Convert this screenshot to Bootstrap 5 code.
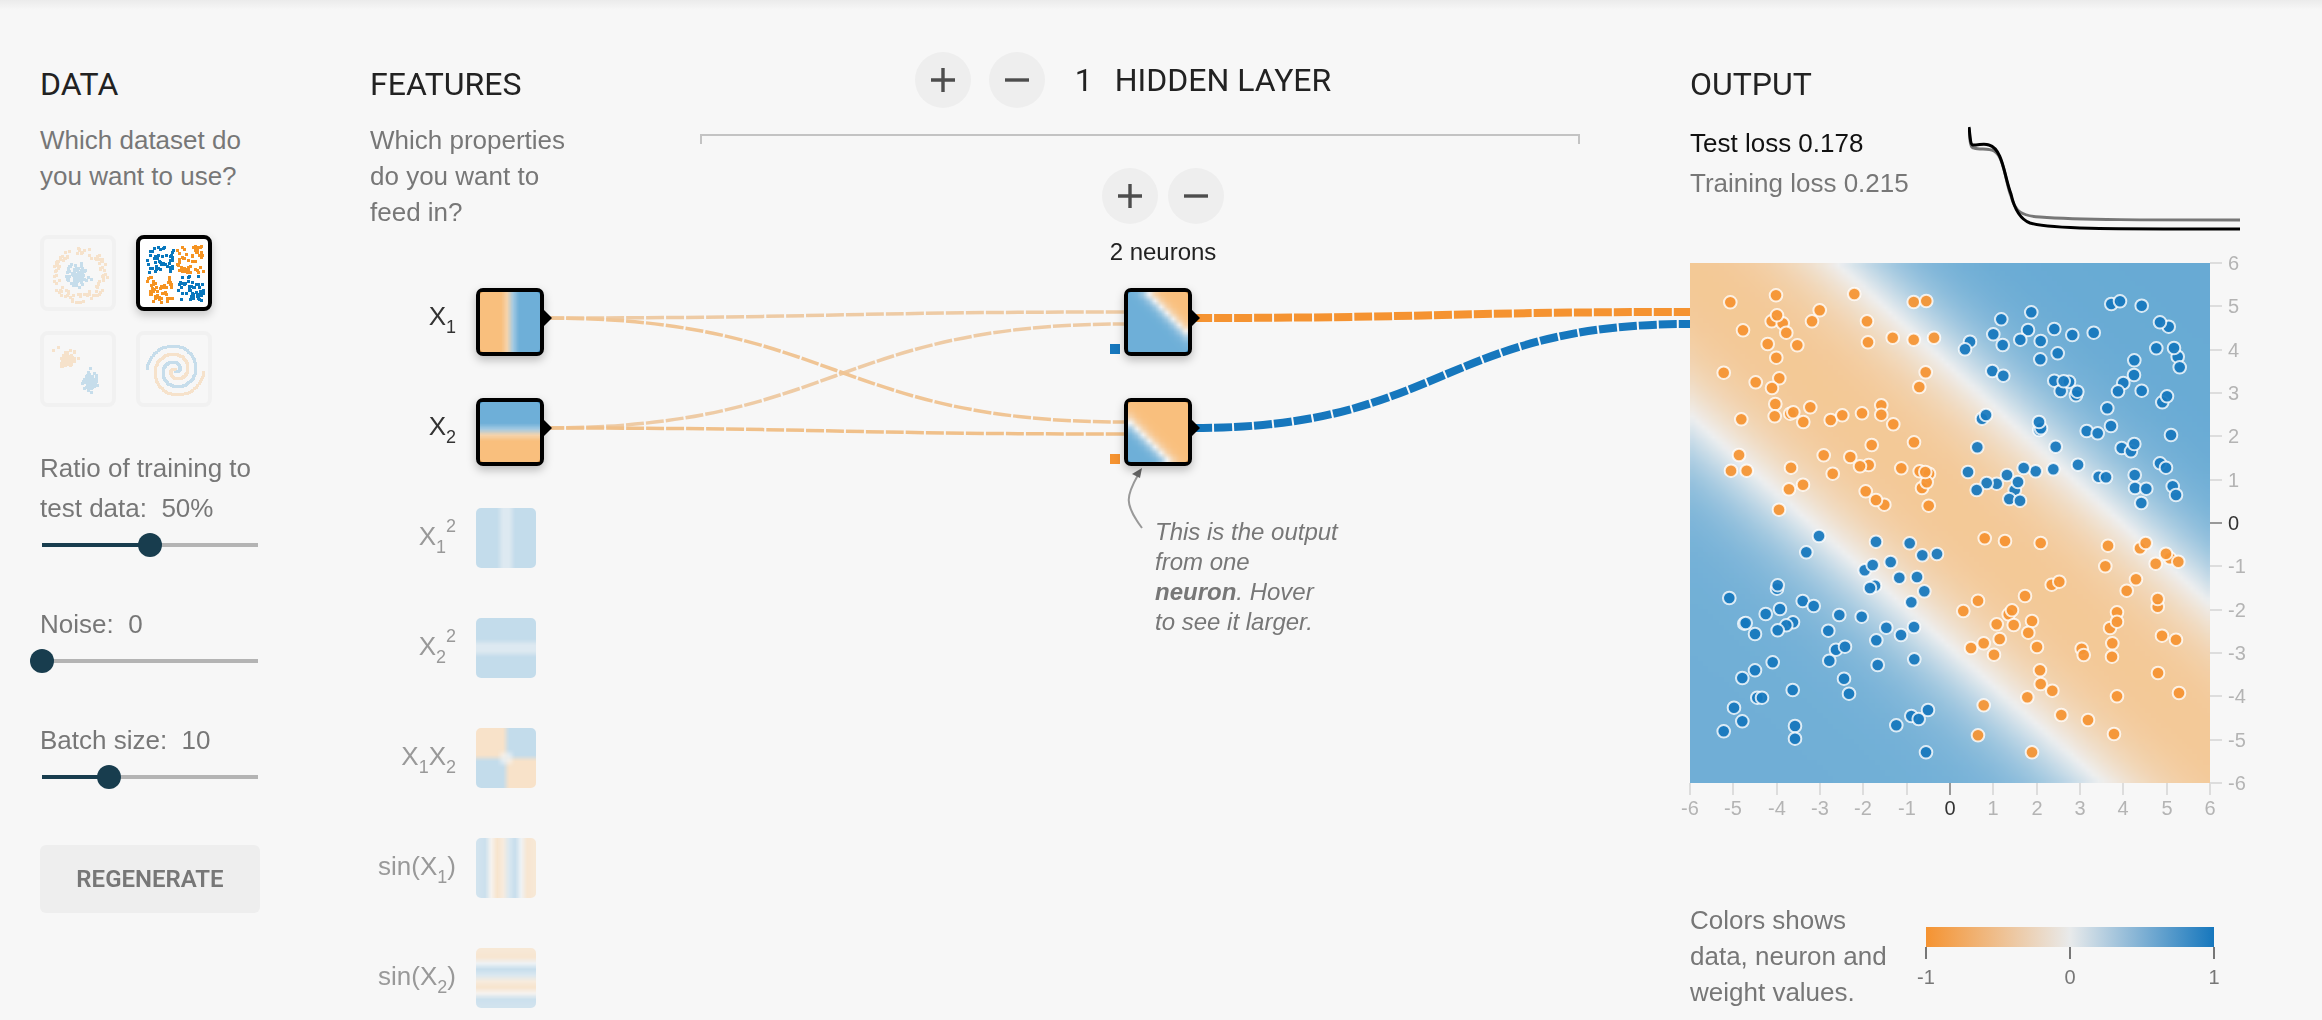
<!DOCTYPE html>
<html lang="en">
<head>
<meta charset="utf-8">
<meta name="viewport" content="width=device-width, initial-scale=1">
<title>Neural Network Playground</title>
<link href="https://cdn.jsdelivr.net/npm/bootstrap@5.3.0/dist/css/bootstrap.min.css" rel="stylesheet">
<style>
  body { background: #f7f7f7; color: #777; font: 26px/36px "Liberation Sans", Arial, sans-serif; }
  .page-shade { height: 10px; background: linear-gradient(#ebebeb, #f7f7f7); }
  .playground { padding: 0 40px; }
  .col-data { width: 220px; margin-right: 110px; padding-top: 54px; }
  .col-features { width: 206px; margin-right: 124px; padding-top: 54px; }
  .col-network { margin-right: 110px; padding-top: 42px; }
  .col-output { width: 592px; padding-top: 54px; }
  .part-title { font: 400 32px/40px Roboto, sans-serif; color: #222; margin: 0 0 18px; }

  .sets { display: grid; grid-template-columns: 76px 76px; gap: 20px; margin: 41px 0; }
  .set-btn { width: 76px; height: 76px; padding: 0; border: 4px solid #f1f1f1; border-radius: 8px; background: transparent; line-height: 0; }
  .set-btn canvas { width: 68px; height: 68px; opacity: .2; }
  .set-btn.chosen { border-color: #000; background: #fff; box-shadow: 0 4px 10px rgba(0,0,0,.2); }
  .set-btn.chosen canvas { opacity: 1; }

  .knob { margin-bottom: 47px; }
  .knob label { display: block; line-height: 40px; white-space: pre-wrap; margin-bottom: 5px; }
  .knob .form-range { display: block; width: 240px; height: 24px; margin: 0 -10px; }
  .knob .form-range::-webkit-slider-runnable-track {
    height: 24px; border-radius: 0;
    background: linear-gradient(to right, #183d4e var(--fill), #b4b4b4 var(--fill)) center / calc(100% - 24px) 4px no-repeat;
  }
  .knob .form-range::-webkit-slider-thumb { width: 24px; height: 24px; margin-top: 0; background: #183d4e; box-shadow: none; }
  .btn-regen { --bs-btn-bg: #eee; --bs-btn-color: #777; --bs-btn-hover-bg: #e4e4e4; --bs-btn-hover-color: #555;
    height: 68px; margin-top: 56px; border: 0; border-radius: 6px; font: 600 24px/36px Roboto, sans-serif; }
  .knob:last-of-type { margin-bottom: 0; }

  .feature-list { display: grid; row-gap: 50px; margin-top: 58px; }
  .feature { height: 60px; column-gap: 20px; color: #999; }
  .feature.on { color: #333; }
  .feature-name { width: 86px; line-height: 56px; text-align: right; white-space: nowrap; }
  .feature-name sub, .feature-name sup { font-size: 18px; }
  .feature-name sub { bottom: -8px; }
  .feature-name sup { top: -13px; }
  .tile { position: relative; z-index: 1; width: 60px; height: 60px; border-radius: 5px; overflow: hidden; flex: none; opacity: .38; line-height: 0; background: #fff; }
  .tile canvas { width: 60px; height: 60px; }
  .on .tile, .neuron .tile { width: 68px; height: 68px; border: 4px solid #000; border-radius: 7px; overflow: visible; opacity: 1; box-shadow: 0 4px 10px rgba(0,0,0,.25); }
  .on .tile::after, .neuron .tile::after { content: ""; position: absolute; left: 64px; top: 18px; border: 8px solid transparent; border-left-color: #000; border-right-width: 0; }

  .btn-round { width: 56px; height: 56px; padding: 0; border: 0; border-radius: 50%; background: #eee; display: flex; align-items: center; justify-content: center; }
  .btn-round svg { fill: none; stroke: #4d4d4d; stroke-width: 3.4; }
  .layer-head { padding-right: 34px; font: 400 32px/56px Roboto, sans-serif; color: #222; }
  .layer-head .btn-round + .btn-round { margin: 0 30px 0 18px; }
  .layer-count { margin-right: 22px; }
  .bracket { height: 10px; margin: 26px 0 24px; border: 2px solid #c3c3c3; border-bottom: 0; }
  .layer-wrap { padding-left: 46px; }
  .layer { width: 122px; }
  .layer-size { font-size: 24px; color: #222; margin: 10px 0 18px; text-align: center; }
  .neuron { height: 60px; margin: 0 0 50px 22px; position: relative; }
  .bias { position: absolute; left: -14px; top: 56px; width: 10px; height: 10px; }
  .callout { position: relative; margin: 59px 0 0 53px; width: 200px; font-size: 24px; line-height: 30px; font-style: italic; }
  .callout svg { position: absolute; left: -33px; top: -51px; }
  .links { position: absolute; inset: 0; width: 100%; height: 100%; fill: none; }

  .losses { width: 278px; line-height: 40px; padding-top: 1px; }
  .loss-chart { margin-top: 4px; fill: none; stroke-width: 3; }
  .plot { position: relative; height: 560px; margin-top: 29px; }
  .plot canvas { position: absolute; left: 0; top: 0; width: 520px; height: 520px; }
  .plot svg { position: absolute; left: 0; top: 0; overflow: visible; }
  .axis-text { font-size: 20px; fill: #b4b4b4; }
  .axis-text .origin { fill: #333; }
  .legend-row { margin-top: 79px; column-gap: 36px; }
  .legend-note { width: 200px; }
  .legend-key { margin-top: 25px; overflow: visible; font-size: 20px; }
</style>
<script src="https://cdn.jsdelivr.net/npm/bootstrap@5.3.0/dist/js/bootstrap.bundle.min.js"></script>
</head>
<body>
<div class="page-shade"></div>
<main class="playground d-flex align-items-start position-relative" id="playground">
  <svg class="links" id="links" aria-hidden="true"></svg>

  <section class="col-data flex-shrink-0">
    <h2 class="part-title">DATA</h2>
    <div>Which dataset do you want to use?</div>
    <div class="sets">
      <button class="set-btn" aria-label="Circle"><canvas data-set="circle" width="68" height="68"></canvas></button>
      <button class="set-btn chosen" aria-label="Exclusive or"><canvas data-set="xor" width="68" height="68"></canvas></button>
      <button class="set-btn" aria-label="Gaussian"><canvas data-set="gauss" width="68" height="68"></canvas></button>
      <button class="set-btn" aria-label="Spiral"><canvas data-set="spiral" width="68" height="68"></canvas></button>
    </div>
    <div class="knob">
      <label for="ratio">Ratio of training to test data:  50%</label>
      <input class="form-range" type="range" id="ratio" min="10" max="90" value="50" style="--fill:50%">
    </div>
    <div class="knob">
      <label for="noise">Noise:  0</label>
      <input class="form-range" type="range" id="noise" min="0" max="50" value="0" style="--fill:0%">
    </div>
    <div class="knob">
      <label for="batch">Batch size:  10</label>
      <input class="form-range" type="range" id="batch" min="1" max="30" value="10" style="--fill:31%">
    </div>
    <button class="btn btn-regen w-100">REGENERATE</button>
  </section>

  <section class="col-features flex-shrink-0">
    <h2 class="part-title">FEATURES</h2>
    <div>Which properties do you want to feed in?</div>
    <div class="feature-list">
      <div class="feature on d-flex"><div class="feature-name">X<sub>1</sub></div><div class="tile" id="x1"><canvas data-fn="x1"></canvas></div></div>
      <div class="feature on d-flex"><div class="feature-name">X<sub>2</sub></div><div class="tile" id="x2"><canvas data-fn="x2"></canvas></div></div>
      <div class="feature d-flex"><div class="feature-name">X<sub>1</sub><sup>2</sup></div><div class="tile"><canvas data-fn="x1sq"></canvas></div></div>
      <div class="feature d-flex"><div class="feature-name">X<sub>2</sub><sup>2</sup></div><div class="tile"><canvas data-fn="x2sq"></canvas></div></div>
      <div class="feature d-flex"><div class="feature-name">X<sub>1</sub>X<sub>2</sub></div><div class="tile"><canvas data-fn="prod"></canvas></div></div>
      <div class="feature d-flex"><div class="feature-name">sin(X<sub>1</sub>)</div><div class="tile"><canvas data-fn="sin1"></canvas></div></div>
      <div class="feature d-flex"><div class="feature-name">sin(X<sub>2</sub>)</div><div class="tile"><canvas data-fn="sin2"></canvas></div></div>
    </div>
  </section>

  <section class="col-network flex-grow-1">
    <div class="layer-head d-flex justify-content-center">
      <button class="btn-round" aria-label="Add layer"><svg width="24" height="24"><path d="M0 12H24M12 0V24"/></svg></button>
      <button class="btn-round" aria-label="Remove layer"><svg width="24" height="24"><path d="M0 12H24"/></svg></button>
      <span class="layer-count">1</span><span>HIDDEN LAYER</span>
    </div>
    <div class="bracket"></div>
    <div class="layer-wrap d-flex justify-content-center">
      <div class="layer flex-shrink-0">
        <div class="d-flex justify-content-between">
          <button class="btn-round" aria-label="Add neuron"><svg width="24" height="24"><path d="M0 12H24M12 0V24"/></svg></button>
          <button class="btn-round" aria-label="Remove neuron"><svg width="24" height="24"><path d="M0 12H24"/></svg></button>
        </div>
        <div class="layer-size">2 neurons</div>
        <div class="neuron"><div class="tile" id="n1"><canvas data-fn="n1"></canvas></div><span class="bias" style="background:#1677bd"></span></div>
        <div class="neuron mb-0"><div class="tile" id="n2"><canvas data-fn="n2"></canvas></div><span class="bias" style="background:#f59331"></span></div>
        <div class="callout">
          <svg width="24" height="64" aria-hidden="true"><path d="M20 62C2 38 4 30 16 9" fill="none" stroke="#999" stroke-width="2"/><path d="M20 2L10 8L18 12Z" fill="#666"/></svg>
          This is the output<br>from one<br><b>neuron</b>. Hover<br>to see it larger.
        </div>
      </div>
    </div>
  </section>

  <section class="col-output flex-shrink-0">
    <h2 class="part-title">OUTPUT</h2>
    <div class="d-flex align-items-start">
      <div class="losses">
        <div style="color:#111">Test loss 0.178</div>
        <div>Training loss 0.215</div>
      </div>
      <svg class="loss-chart" width="274" height="108">
        <path stroke="#777" d="M1 2C2 14 2 22 6 22C12 24 20 22 26 25C36 30 38 58 43 70C47 86 54 90 72 91C110 94 180 94 272 94"/>
        <path stroke="#000" d="M1 1C2 8 2 19 5 19C12 19 16 17 21 19C35 23 36 50 43 68C47 86 54 94 62 97C84 103 130 103 272 103"/>
      </svg>
    </div>
    <div class="plot" id="plot">
      <canvas data-fn="out" data-n="100"></canvas>
      <svg width="592" height="560" role="img" aria-label="Output scatter plot">
        <g id="dots" stroke="#fff" stroke-opacity=".8" stroke-width="2"></g>
        <g id="axes" class="axis-text"></g>
      </svg>
    </div>
    <div class="legend-row d-flex align-items-start">
      <div class="legend-note">Colors shows data, neuron and weight values.</div>
      <svg class="legend-key" width="288" height="64" fill="#777">
        <defs><linearGradient id="scale"><stop offset="0" stop-color="#f59331"/><stop offset=".5" stop-color="#e8eaeb"/><stop offset="1" stop-color="#1677bd"/></linearGradient></defs>
        <rect width="288" height="20" fill="url(#scale)"/>
        <path d="M0 20V32M144 20V32M288 20V32" stroke="#777" stroke-width="2"/>
        <g text-anchor="middle"><text x="0" y="57">-1</text><text x="144" y="57">0</text><text x="288" y="57">1</text></g>
      </svg>
    </div>
  </section>
</main>

<script>
// Diverging colour scale, orange (-1) to blue (+1)
const LOW = [245, 147, 34], MID = [232, 234, 235], HIGH = [8, 119, 189];
function shade(v) {
  v = Math.max(-1, Math.min(1, v));
  const end = v < 0 ? LOW : HIGH, t = Math.abs(v);
  return MID.map((m, i) => m + (end[i] - m) * t);
}
const sig = z => 1 / (1 + Math.exp(-z));
const FNS = {
  x1: (x, y) => x, x2: (x, y) => y,
  x1sq: (x, y) => x * x, x2sq: (x, y) => y * y, prod: (x, y) => x * y,
  sin1: (x, y) => Math.sin(x), sin2: (x, y) => Math.sin(y),
  n1: (x, y) => -Math.tanh(.62 * (y + 1.02 * x - 3.6)),
  n2: (x, y) => -Math.tanh(.62 * (y + x + 3.6)),
  out: (x, y) => -.78 + 1.76 * sig(1.2 * (y + .91 * x - 3.8)) + 1.7 * sig(-1.2 * (y + .89 * x + 3.0))
};
document.querySelectorAll('canvas[data-fn]').forEach(c => {
  const n = +(c.dataset.n || 10), f = FNS[c.dataset.fn], sub = 100 / n;
  c.width = c.height = n;
  const ctx = c.getContext('2d'), img = ctx.createImageData(n, n);
  for (let j = 0; j < n; j++) for (let i = 0; i < n; i++) {
    let sum = 0;
    for (let b = 0; b < sub; b++) for (let a = 0; a < sub; a++)
      sum += f(-6 + 12 * (i * sub + a + .5) / 100, 6 - 12 * (j * sub + b + .5) / 100);
    img.data.set([...shade(sum / sub / sub), n === 10 ? 150 : 156], (j * n + i) * 4);
  }
  ctx.putImageData(img, 0, 0);
});

// Dataset thumbnails
let seed = 7;
const rnd = () => (seed = (seed * 16807) % 2147483647) / 2147483647;
const gauss = () => Math.sqrt(-2 * Math.log(rnd() + 1e-9)) * Math.cos(2 * Math.PI * rnd());
const SETS = {
  circle(p) { for (let i = 0; i < 100; i++) {
    let a = rnd() * 6.283, r = rnd() * 2.4; p(r * Math.sin(a), r * Math.cos(a), 1);
    a = rnd() * 6.283; r = 3.5 + rnd() * 1.5; p(r * Math.sin(a), r * Math.cos(a), -1); } },
  xor(p) { for (let i = 0; i < 196; i++) {
    const sx = i & 1 ? 1 : -1, sy = i & 2 ? 1 : -1;
    p(sx * (.35 + rnd() * 4.6), sy * (.35 + rnd() * 4.6), sx * sy); } },
  gauss(p) { for (let i = 0; i < 100; i++) {
    p(2 + gauss() * .6, 2 + gauss() * .6, 1); p(-2 + gauss() * .6, -2 + gauss() * .6, -1); } },
  spiral(p) { for (let i = 0; i < 130; i++) for (const s of [1, -1]) {
    const r = i / 130 * 5, t = 1.75 * i / 130 * 2 * Math.PI + (s < 0 ? Math.PI : 0);
    p(r * Math.sin(t), r * Math.cos(t), s); } }
};
document.querySelectorAll('canvas[data-set]').forEach(c => {
  const ctx = c.getContext('2d');
  SETS[c.dataset.set]((x, y, v) => {
    ctx.fillStyle = v > 0 ? '#0877bd' : '#f59322';
    ctx.fillRect(Math.round(34 + x * 5.67), Math.round(34 + y * 5.67), 3, 3);
  });
});

// Sample points, one list per quadrant; a third of a pixel per unit
const QUADS = [
  { ox: -30, oy: -24, color: '#f59331', pts: '151,142 288,121 419,166 396,199 275,199 308,205 291,181 319,233 189,226 263,267 352,271 289,308 131,353 227,382 298,370 276,399 286,447 284,484 331,476 340,472 391,457 370,501 184,493 452,495 487,481 546,475 604,451 604,479 640,508 575,570 702,562 523,117 561,199 564,262 638,248 701,254 762,248 701,141 739,138 737,352 718,396 177,600 153,647 200,647 333,638 431,601 511,606 566,630 540,634 458,656 369,689 327,703 297,764 557,709 613,749 588,735 664,640 719,649 747,656 726,699 740,682 736,651 746,752' },
  { ox: 780, oy: -24, color: '#1677bd', pts: '60,260 45,283 154,193 244,172 130,238 158,270 234,225 211,254 272,258 313,222 367,240 431,233 271,313 323,295 127,348 160,362 484,147 510,139 575,152 656,215 630,202 619,280 683,305 672,279 689,337 553,316 552,360 520,384 504,409 575,407 637,442 651,424 313,377 357,380 332,408 341,379 378,421 382,410 472,460 483,513 410,528 443,535 268,525 273,520 267,501 96,491 108,480 82,577 317,575 384,629 310,643 257,649 221,639 54,651 171,660 140,686 110,684 80,705 194,706 204,681 178,732 210,737 446,665 468,667 515,579 543,589 553,567 663,540 630,625 648,638 554,660 555,699 589,701 574,744 668,694 678,720' },
  { ox: -30, oy: 771, color: '#1677bd', pts: '417,48 379,97 588,65 689,70 727,106 771,102 632,126 554,151 578,135 658,173 711,171 585,197 570,204 733,214 694,247 291,206 293,196 148,234 300,267 257,282 368,243 401,258 193,311 197,309 225,342 339,307 319,316 293,331 445,332 478,285 545,290 619,323 702,321 663,345 589,361 468,389 495,380 448,422 593,435 703,418 278,427 225,451 187,474 338,510 492,476 507,521 232,533 246,533 162,563 187,604 131,634 345,618 345,656 649,616 694,588 716,597 744,570 738,697' },
  { ox: 780, oy: 771, color: '#f59331', pts: '104,55 165,63 272,69 474,77 466,139 570,85 587,69 660,115 648,101 685,125 617,131 558,178 530,212 305,194 328,185 84,242 225,228 40,273 176,283 186,271 140,313 191,315 246,303 235,338 63,384 101,370 149,357 132,404 261,381 395,386 401,405 501,277 480,324 501,305 487,370 486,410 623,260 623,237 636,347 678,359 270,451 272,492 307,512 232,532 101,556 84,646 246,697 334,585 414,600 501,529 492,642 624,459 687,519' }
];
const dots = [];
for (const q of QUADS) for (const pair of q.pts.split(' ')) {
  const [x, y] = pair.split(',').map(Number);
  dots.push(`<circle cx="${((x + q.ox) / 3).toFixed(1)}" cy="${((y + q.oy) / 3).toFixed(1)}" r="6.3" fill="${q.color}" fill-opacity=".93"/>`);
}
document.getElementById('dots').innerHTML = dots.join('');

let axes = '';
for (let v = -6; v <= 6; v++) {
  const p = Math.round((v + 6) * 520 / 12), q = 520 - p, s = v ? '#ddd' : '#999', k = v ? '' : ' class="origin"';
  axes += `<path d="M${p} 520v12M520 ${q}h12" stroke="${s}" stroke-width="2"/>` +
    `<text${k} x="${p}" y="552" text-anchor="middle">${v}</text><text${k} x="538" y="${q + 7}">${v}</text>`;
}
document.getElementById('axes').innerHTML = axes;

// Connections between tiles, recomputed when the window changes
const LINKS = [
  ['x1', 'n1', -6, '#eecba5', 3.5], ['x2', 'n1', 6, '#eecba5', 3.5],
  ['x1', 'n2', -6, '#f0c595', 3.5], ['x2', 'n2', 6, '#f0c08a', 3.5],
  ['n1', 'plot', -6, '#f59331', 8], ['n2', 'plot', 6, '#1677bd', 8]
];
function drawLinks() {
  const base = document.getElementById('playground').getBoundingClientRect();
  const box = id => document.getElementById(id).getBoundingClientRect();
  const rowY = box('n1').top - base.top + 30;
  document.getElementById('links').innerHTML = LINKS.map(([a, b, dy, color, w]) => {
    const s = box(a), t = box(b);
    const x0 = s.right - base.left + 2, y0 = s.top - base.top + 30;
    const x1 = t.left - base.left, y1 = (b === 'plot' ? rowY : t.top - base.top + 30) + dy, m = (x0 + x1) / 2;
    return `<path d="M${x0} ${y0}C${m} ${y0} ${m} ${y1} ${x1} ${y1}" stroke="${color}" stroke-width="${w}" stroke-dasharray="18 2"/>`;
  }).join('');
}
drawLinks();
addEventListener('resize', drawLinks);
</script>
</body>
</html>
